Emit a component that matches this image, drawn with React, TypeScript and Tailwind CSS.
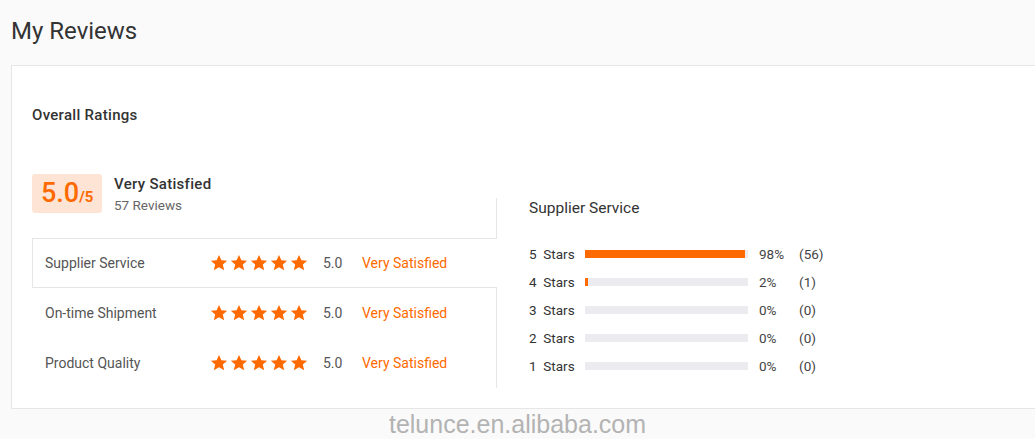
import React from "react";

const Star = () => (
  <svg width="18" height="18" viewBox="0 0 24 24" className="shrink-0">
    <path
      d="M12 1.2l3.2 7.1 7.7.7-5.8 5.1 1.8 7.6L12 17.8l-6.9 3.9 1.8-7.6-5.8-5.1 7.7-.7z"
      fill="#ff6a00"
    />
  </svg>
);

const ratings = [
  { label: "Supplier Service", active: true },
  { label: "On-time Shipment", active: false },
  { label: "Product Quality", active: false },
];

const bars = [
  { stars: 5, pct: 98, count: 56 },
  { stars: 4, pct: 2, count: 1 },
  { stars: 3, pct: 0, count: 0 },
  { stars: 2, pct: 0, count: 0 },
  { stars: 1, pct: 0, count: 0 },
];

export default function App() {
  return (
    <div className="w-[1035px] h-[439px] overflow-hidden bg-[#fafafa] font-['Roboto',sans-serif]">
      <h1 className="pl-[11px] pt-[16px] text-[24px] leading-[30px] text-[#333]">My Reviews</h1>

      <div className="mt-[19px] ml-[11px] bg-white border border-r-0 border-[#e6e6e6] pl-[20px] pt-[39px] pb-[20px]">
        <div className="text-[15px] leading-[20px] font-medium tracking-[0.3px] text-[#333]">Overall Ratings</div>

        <div className="mt-[49px] flex items-end">
          {/* left column */}
          <div className="w-[464px]">
            <div className="flex items-center h-[39px]">
              <div className="h-[39px] w-[70px] rounded-[3px] bg-[#fee4d4] flex items-baseline pl-[9px] pt-[2px] text-[#ff6a00]">
                <span className="text-[27px] leading-[35px] font-medium">5.0</span>
                <span className="text-[15px] font-bold">/5</span>
              </div>
              <div className="ml-[12px]">
                <div className="text-[15px] leading-[20px] font-medium tracking-[0.3px] text-[#333]">Very Satisfied</div>
                <div className="text-[13.5px] leading-[18px] text-[#666] mt-[2px]">57 Reviews</div>
              </div>
            </div>

            <div className="mt-[25px]">
              {ratings.map((r) => (
                <div
                  key={r.label}
                  className={
                    r.active
                      ? "relative z-10 w-[465px] h-[50px] flex items-center bg-white border border-r-0 border-[#e6e6e6] pl-[12px] text-[14px] text-[#555]"
                      : "w-[465px] h-[50px] flex items-center pl-[13px] text-[14px] text-[#555]"
                  }
                >
                  <span className="w-[165px]">{r.label}</span>
                  <span className="flex gap-[2px]">
                    <Star />
                    <Star />
                    <Star />
                    <Star />
                    <Star />
                  </span>
                  <span className="ml-[15px] w-[39px] text-[#555]">5.0</span>
                  <span className="text-[#ff6a00]">Very Satisfied</span>
                </div>
              ))}
            </div>
          </div>

          {/* right panel */}
          <div className="h-[190px] border-l border-[#e6e6e6] pl-[32px]">
            <div className="text-[15.5px] leading-[20px] text-[#333]">Supplier Service</div>
            <div className="mt-[29px] flex flex-col gap-[14px]">
              {bars.map((b) => (
                <div key={b.stars} className="flex items-center h-[14px] text-[13.5px] text-[#333]">
                  <span className="w-[56px] whitespace-pre">{b.stars}  Stars</span>
                  <div className="w-[163px] h-[8px] bg-[#ebebf0]">
                    <div className="h-full bg-[#ff6a00]" style={{ width: `${b.pct}%` }} />
                  </div>
                  <span className="ml-[11px] w-[40px] text-[#444]">{b.pct}%</span>
                  <span className="text-[#444]">({b.count})</span>
                </div>
              ))}
            </div>
          </div>
        </div>
      </div>

      <div className="text-center text-[25px] leading-[30px] text-[#b3b3b3] font-['Liberation_Sans',Arial,sans-serif]">
        telunce.en.alibaba.com
      </div>
    </div>
  );
}
